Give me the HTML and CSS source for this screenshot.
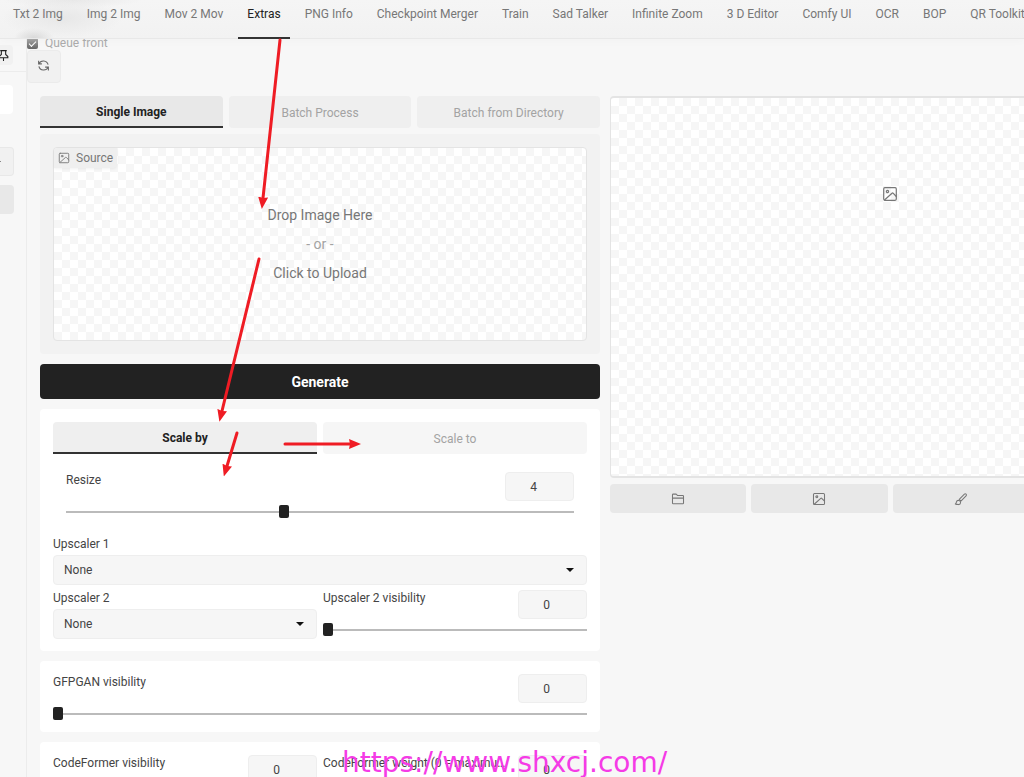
FILE: index.html
```html
<!DOCTYPE html>
<html lang="en">
<head>
<meta charset="utf-8">
<title>Extras</title>
<link rel="stylesheet" href="styles.css">
</head>
<body>
<svg class="defs" aria-hidden="true">
  <symbol id="image" viewBox="0 0 16 16"><rect x="1.7" y="1.7" width="12.6" height="12.6" rx="1.2"/><circle cx="5.500" cy="5.500" r="1.1"/><path d="M2.500 14 10 7.200a.8.8 0 0 1 1.100 0l3.200 3.300"/></symbol>
  <symbol id="folder" viewBox="0 0 16 16"><path d="M1.700 12.600V3.200c0-.5.3-.8.8-.8h3.400l1.700 1.700h5.900c.5 0 .8.3.8.8v7.700c0 .5-.3.9-.8.9h-11c-.5 0-.8-.4-.8-.9ZM1.700 7h12.600"/></symbol>
  <symbol id="brush" viewBox="0 0 16 16"><path d="m6 8.300 5.900-5.800a1.300 1.300 0 0 1 1.900 1.900l-5.900 5.900M6 8.300l1.900 2M1.500 13.800c1-.4 1-1.200 1.300-2.400a2.400 2.400 0 1 1 2.300 3c-1.300 0-2.500-.1-3.600-.6Z"/></symbol>
</svg>
<header class="topbar">
  <nav class="tabs-nav" role="tablist" aria-label="Sections">
    <button role="tab">Txt 2 Img</button>
    <button role="tab">Img 2 Img</button>
    <button role="tab">Mov 2 Mov</button>
    <button role="tab" aria-selected="true">Extras</button>
    <button role="tab">PNG Info</button>
    <button role="tab">Checkpoint Merger</button>
    <button role="tab">Train</button>
    <button role="tab">Sad Talker</button>
    <button role="tab">Infinite Zoom</button>
    <button role="tab">3 D Editor</button>
    <button role="tab">Comfy UI</button>
    <button role="tab">OCR</button>
    <button role="tab">BOP</button>
    <button role="tab">QR Toolkit</button>
  </nav>
</header>
<div class="shell">
  <aside class="sidebar">
    <div class="side-head"><button class="pin" aria-label="Pin sidebar"><svg viewBox="0 0 24 24"><path d="M6 3h12M8 3v7l-4 4v2h16v-2l-4-4V3M12 16v6"/></svg></button></div>
    <div class="side-body">
      <input class="side-search" aria-label="Search">
      <button class="side-btn outlined" aria-label="Collapse"><i></i></button>
      <button class="side-btn" aria-label="Apply"></button>
    </div>
  </aside>
  <main class="main">
    <label class="queue"><input type="checkbox" checked><span>Queue front</span></label>
    <button class="refresh" aria-label="Refresh"><svg viewBox="0 0 24 24"><path d="M3 3v6h6M21 21v-6h-6M3.500 9a9 9 0 0 1 17 1.500M3.500 13.500a9 9 0 0 0 17 1.500"/></svg></button>
    <div class="columns">
      <section class="column">
        <div class="tabs" role="tablist" aria-label="Input">
          <button role="tab" aria-selected="true">Single Image</button>
          <button role="tab">Batch Process</button>
          <button role="tab">Batch from Directory</button>
        </div>
        <div class="upload-panel">
          <div class="source"><svg class="icon"><use href="#image"/></svg>Source</div>
          <button class="drop checker"><span>Drop Image Here</span><span class="or">- or -</span><span>Click to Upload</span></button>
        </div>
        <button class="generate">Generate</button>
        <div class="card scale-card">
          <div class="tabs" role="tablist" aria-label="Scale mode">
            <button role="tab" aria-selected="true">Scale by</button>
            <button role="tab">Scale to</button>
          </div>
          <div class="slider inset">
            <label for="resize">Resize</label>
            <input type="number" value="4" aria-label="Resize value">
            <input type="range" id="resize" min="1" max="8" value="4">
          </div>
          <div class="field">
            <label for="up1">Upscaler 1</label>
            <div class="select"><select id="up1"><option>None</option></select><i></i></div>
          </div>
          <div class="pair">
            <div class="field">
              <label for="up2">Upscaler 2</label>
              <div class="select"><select id="up2"><option>None</option></select><i></i></div>
            </div>
            <div class="slider">
              <label for="up2v">Upscaler 2 visibility</label>
              <input type="number" value="0" aria-label="Upscaler 2 visibility value">
              <input type="range" id="up2v" min="0" max="1" value="0">
            </div>
          </div>
        </div>
        <div class="card">
          <div class="slider">
            <label for="gfp">GFPGAN visibility</label>
            <input type="number" value="0" aria-label="GFPGAN visibility value">
            <input type="range" id="gfp" min="0" max="1" value="0">
          </div>
        </div>
        <div class="card pair">
          <div class="slider">
            <label for="cfv">CodeFormer visibility</label>
            <input type="number" value="0" aria-label="CodeFormer visibility value">
            <input type="range" id="cfv" min="0" max="1" value="0">
          </div>
          <div class="slider">
            <label for="cfw">CodeFormer weight (0 = maximum effect, 1 = minimum effect)</label>
            <input type="number" value="0" aria-label="CodeFormer weight value">
            <input type="range" id="cfw" min="0" max="1" value="0">
          </div>
        </div>
      </section>
      <section class="column">
        <div class="result checker"><svg class="icon"><use href="#image"/></svg></div>
        <div class="actions">
          <button aria-label="Open folder"><svg class="icon"><use href="#folder"/></svg></button>
          <button aria-label="Send to Img 2 Img"><svg class="icon"><use href="#image"/></svg></button>
          <button aria-label="Send to inpaint"><svg class="icon"><use href="#brush"/></svg></button>
          <button aria-label="Send to Extras"><svg class="icon"><use href="#image"/></svg></button>
        </div>
      </section>
    </div>
  </main>
</div>
<svg class="arrows" aria-hidden="true">
  <defs><marker id="head" viewBox="0 0 12 10" refX="1" refY="5" markerWidth="12" markerHeight="10" markerUnits="userSpaceOnUse" orient="auto"><path d="M0 0 12 5 0 10 1 5Z"/></marker></defs>
  <path class="line" d="M280 40 263 198"/>
  <path class="line" d="M259 259 222 411"/>
  <path class="line" d="M237 433 227 466"/>
  <path class="line" d="M285 444H350"/>
</svg>
<div class="watermark">https://www.shxcj.com/</div>
</body>
</html>
```
FILE: styles.css
```css
* { box-sizing: border-box; }
body {
  margin: 0;
  height: 100vh;
  overflow: hidden;
  display: flex;
  flex-direction: column;
  background: #f7f7f7;
  color: #444;
  font: 12px/16px Roboto, "Liberation Sans", sans-serif;
}
button, input, select { font: inherit; color: inherit; margin: 0; border: 0; padding: 0; background: none; border-radius: 4px; }
.defs { position: absolute; width: 0; height: 0; }
.icon { width: 14px; height: 14px; fill: none; stroke: #777; stroke-width: 1.2; stroke-linejoin: round; stroke-linecap: round; }

.topbar {
  flex: none;
  height: 39px;
  border-bottom: 1px solid #e8e8e8;
  background:
    radial-gradient(ellipse 60px 20px at 62px 18px, #e7e7e7, transparent),
    radial-gradient(ellipse 70px 8px at 72px 0, #e8e8e8, transparent),
    radial-gradient(ellipse 20px 10px at 34px 38px, #d8d8d8, transparent),
    linear-gradient(#f5f5f5, #f2f2f2);
  box-shadow: 0 3px 8px rgba(0, 0, 0, .02);
}
.tabs-nav { display: flex; gap: 6px; height: 39px; padding-left: 4px; }
.tabs-nav button { flex: none; padding: 0 9px 9px; border-radius: 0; color: #777; white-space: nowrap; border-bottom: 2px solid transparent; }
.tabs-nav button[aria-selected] { color: #222; border-color: #333; }

.shell { flex: 1; min-height: 0; display: flex; }
.sidebar { flex: none; width: 27px; border-right: 1px solid #ececec; overflow: hidden; }
.side-head { height: 33px; padding-top: 6px; border-bottom: 1px solid #ececec; }
.pin { display: flex; align-items: center; width: 13px; height: 20px; background: #f1f1f1; border-radius: 0 4px 4px 0; overflow: hidden; }
.pin svg { flex: none; width: 13px; height: 13px; margin-left: -3px; fill: none; stroke: #222; stroke-width: 2; }
.side-body { display: flex; flex-direction: column; width: 14px; padding-top: 13px; }
.side-search { width: 13px; height: 29px; margin-bottom: 33px; background: #fff; border-radius: 0 4px 4px 0; }
.side-btn { height: 29px; margin-bottom: 9px; background: #e8e8e8; border-radius: 0 4px 4px 0; }
.side-btn.outlined { background: #f1f1f1; border: 1px solid #e8e8e8; border-left: 0; }
.side-btn i { display: block; width: 1px; height: 1px; background: #888; }

.main { flex: 1; min-width: 0; overflow: hidden; }
.queue { display: flex; align-items: center; gap: 7px; height: 11px; overflow: hidden; color: #aaa; line-height: 11px; }
.queue input { appearance: none; width: 11px; height: 11px; margin-top: -3px; border-radius: 2px; background: linear-gradient(#aaa, #666); display: grid; place-items: center; }
.queue input::after { content: ""; width: 6px; height: 3px; border: solid #fff; border-width: 0 0 1px 1px; transform: rotate(-45deg); }
.queue span { margin-top: -3px; }
.refresh { display: grid; place-items: center; width: 34px; height: 33px; padding: 0 2px 2px 0; background: #f1f1f1; border: 1px solid #ebebeb; }
.refresh svg { width: 13px; height: 13px; fill: none; stroke: #666; stroke-width: 2; }

.columns { display: grid; grid-template-columns: repeat(2, minmax(560px, 1fr)); gap: 10px; padding: 13px; }
.column { display: flex; flex-direction: column; gap: 10px; min-width: 0; }
.tabs { display: flex; gap: 6px; }
.tabs button { flex: 1; height: 32px; padding-top: 1px; color: #a3a3a3; background: #efefef; }
.tabs button[aria-selected] { color: #222; font-weight: 700; background: #e8e8e8; border-bottom: 2px solid #333; border-radius: 4px 4px 0 0; }
.upload-panel { position: relative; margin-top: -4px; padding: 13px; background: #f2f2f2; border-radius: 4px; }
.source { position: absolute; left: 14px; top: 14px; display: flex; align-items: center; gap: 6px; height: 20px; padding: 0 4px; color: #777; background: #efefef; border-radius: 3px 0 4px; box-shadow: 0 1px 3px rgba(0, 0, 0, .06); }
.source .icon { width: 12px; height: 12px; }
.checker { background: repeating-conic-gradient(#f6f6f6 0 25%, #fff 0 50%) 0 0 / 16px 16px; border: 1px solid #e4e4e4; border-radius: 4px; }
.drop { display: flex; flex-direction: column; align-items: center; justify-content: center; gap: 9px; width: 100%; height: 194px; font-size: 14px; line-height: 20px; color: #777; }
.or { color: #a3a3a3; }
.generate { height: 35px; color: #fff; background: #222; font-size: 14px; font-weight: 700; }
.card { padding: 13px 13px 12px; background: #fff; border-radius: 4px; }
.scale-card .tabs button { background: #f6f6f6; }
.scale-card .tabs button[aria-selected] { background: #efefef; }
.slider { display: grid; grid-template-columns: minmax(0, 1fr) 69px; align-items: start; align-content: start; column-gap: 4px; min-width: 0; }
.slider label { line-height: 16px; white-space: nowrap; overflow: hidden; text-overflow: ellipsis; }
.slider.inset { margin: 18px 13px; }
input[type=number] { appearance: textfield; width: 69px; height: 29px; padding-right: 12px; text-align: center; background: #f6f6f6; border: 1px solid #eee; }
input[type=number]::-webkit-inner-spin-button { display: none; }
input[type=range] { grid-column: 1 / 3; appearance: none; width: 100%; height: 13px; margin-top: 4px; border-radius: 0; background: linear-gradient(#bbb, #bbb) center / 100% 2px no-repeat; }
input[type=range]::-webkit-slider-thumb { appearance: none; width: 10px; height: 13px; border-radius: 2px; background: #222; }
.field { display: flex; flex-direction: column; gap: 3px; }
.select { position: relative; }
.select select { display: block; appearance: none; width: 100%; height: 30px; padding: 0 10px; background: #f6f6f6; border: 1px solid #eee; }
.select i { position: absolute; right: 13px; top: 13px; border: solid transparent; border-width: 4px 4px 0; border-top-color: #111; pointer-events: none; }
.pair { display: grid; grid-template-columns: repeat(2, minmax(0, 1fr)); gap: 6px; }
.field + .pair { margin-top: 5px; }
.result { display: flex; justify-content: center; height: 382px; padding-top: 88px; border-width: 2px 1px; }
.result .icon { width: 16px; height: 16px; }
.actions { display: grid; grid-template-columns: repeat(4, 1fr); gap: 5px; margin-top: -4px; }
.actions button { display: grid; place-items: center; height: 29px; background: #e8e8e8; }

.arrows { position: absolute; top: 0; left: 0; width: 100%; height: 100%; pointer-events: none; }
.arrows .line { stroke: #ef1c24; stroke-width: 3; stroke-linecap: round; marker-end: url(#head); fill: none; }
.arrows marker path { fill: #ef1c24; }
.watermark { position: absolute; left: 342px; bottom: -2px; font: 28px/32px "DejaVu Sans", sans-serif; color: #f53be6; pointer-events: none; }
```
